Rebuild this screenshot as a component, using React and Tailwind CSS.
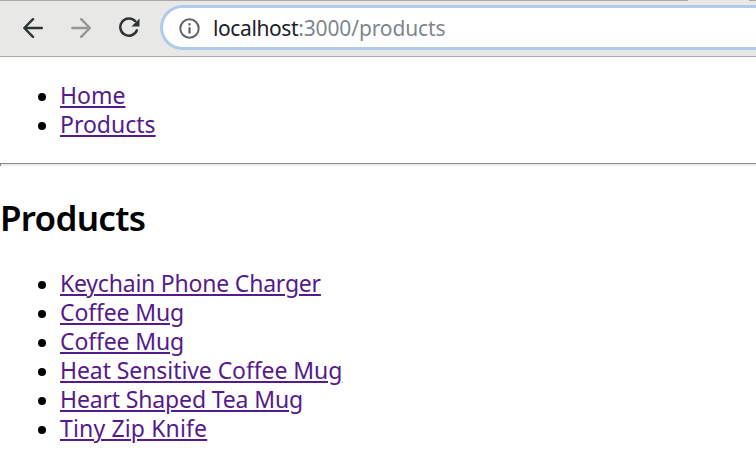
const navigation = [
  { label: 'Home', spacing: 'tracking-[0px]' },
  { label: 'Products', spacing: 'tracking-[0px]' },
];

const products = [
  { label: 'Keychain Phone Charger', spacing: 'tracking-[-0.21px]' },
  { label: 'Coffee Mug', spacing: 'tracking-[-0.14px]' },
  { label: 'Coffee Mug', spacing: 'tracking-[-0.14px]' },
  { label: 'Heat Sensitive Coffee Mug', spacing: 'tracking-[-0.08px]' },
  { label: 'Heart Shaped Tea Mug', spacing: 'tracking-[-0.15px]' },
  { label: 'Tiny Zip Knife', spacing: 'tracking-[0.15px]' },
];

function LinkList({ items }) {
  return (
    <ul>
      {items.map((item, index) => (
        <li key={index} className="flex h-[29px] items-start pl-[38px]">
          <span className="mt-3 mr-[14px] size-2 shrink-0 rounded-full bg-black" />
          <a
            href="#"
            className={`whitespace-nowrap text-[23px] leading-[29px] text-[#551a8b] underline decoration-2 underline-offset-[2px] ${item.spacing}`}
          >
            {item.label}
          </a>
        </li>
      ))}
    </ul>
  );
}

function Toolbar() {
  return (
    <header className="flex h-[57px] items-start border-b border-[#a9a9a9] bg-[#e8e8e6]">
      <div className="w-full">
        <div className="flex h-px">
          <div className="w-[688px] bg-[#a9a9a9]" />
          <div className="w-[61px]" />
          <div className="flex-1 bg-[#a9a9a9]" />
        </div>
        <div className="mt-1 flex h-[45px] items-center">
          <svg className="ml-[23px] size-5" viewBox="0 0 20 20" fill="none" stroke="#2e3436" strokeWidth="2.4" strokeLinecap="round" strokeLinejoin="round">
            <path d="M18.8 10H1.5M10 1.2 1.3 10l8.7 8.8" />
          </svg>
          <svg className="ml-[28px] size-5" viewBox="0 0 20 20" fill="none" stroke="#969696" strokeWidth="2.4" strokeLinecap="round" strokeLinejoin="round">
            <path d="M1.4 10h17.3M10.2 1.2 18.9 10l-8.7 8.8" />
          </svg>
          <svg className="ml-[28px] size-[21px]" viewBox="0 0 21 21" fill="none">
            <path d="M16.2 4.2A8.6 8.6 0 1 0 17.9 13.3" stroke="#2e3436" strokeWidth="2.5" strokeLinecap="round" />
            <path d="M20.5 1.5v8h-8z" fill="#2e3436" />
          </svg>
          <div className="ml-5 flex h-[45px] flex-1 items-center rounded-l-full border-y-3 border-l-3 border-[#aecbeb] bg-white pl-[16px]">
            <svg className="mt-px size-[21px] shrink-0" viewBox="0 0 21 21" fill="none">
              <circle cx="10.5" cy="10.5" r="9.2" stroke="#5f6368" strokeWidth="2" />
              <path d="M10.5 9.2v6.2M10.5 5.3v2.2" stroke="#5f6368" strokeWidth="2.2" />
            </svg>
            <span className="mt-[2px] ml-[13px] whitespace-nowrap text-[21px] tracking-[-0.12px] text-[#80868b]">
              <span className="tracking-[-0.4px] text-[#202124]">localhost</span>:3000/products
            </span>
          </div>
        </div>
      </div>
    </header>
  );
}

export default function App() {
  return (
    <div className="h-[454px] overflow-hidden bg-white font-['Noto_Sans',sans-serif] text-black">
      <Toolbar />
      <nav className="pt-6">
        <LinkList items={navigation} />
      </nav>
      <div className="mt-6 h-[3px] border-t border-l border-[#8b8b8b] bg-[#eeeeee]" />
      <main>
        <h2 className="mt-[30px] h-[44px] text-[35px] leading-[44px] font-semibold tracking-[-0.7px]">
          Products
        </h2>
        <div className="mt-[29px]">
          <LinkList items={products} />
        </div>
      </main>
    </div>
  );
}
